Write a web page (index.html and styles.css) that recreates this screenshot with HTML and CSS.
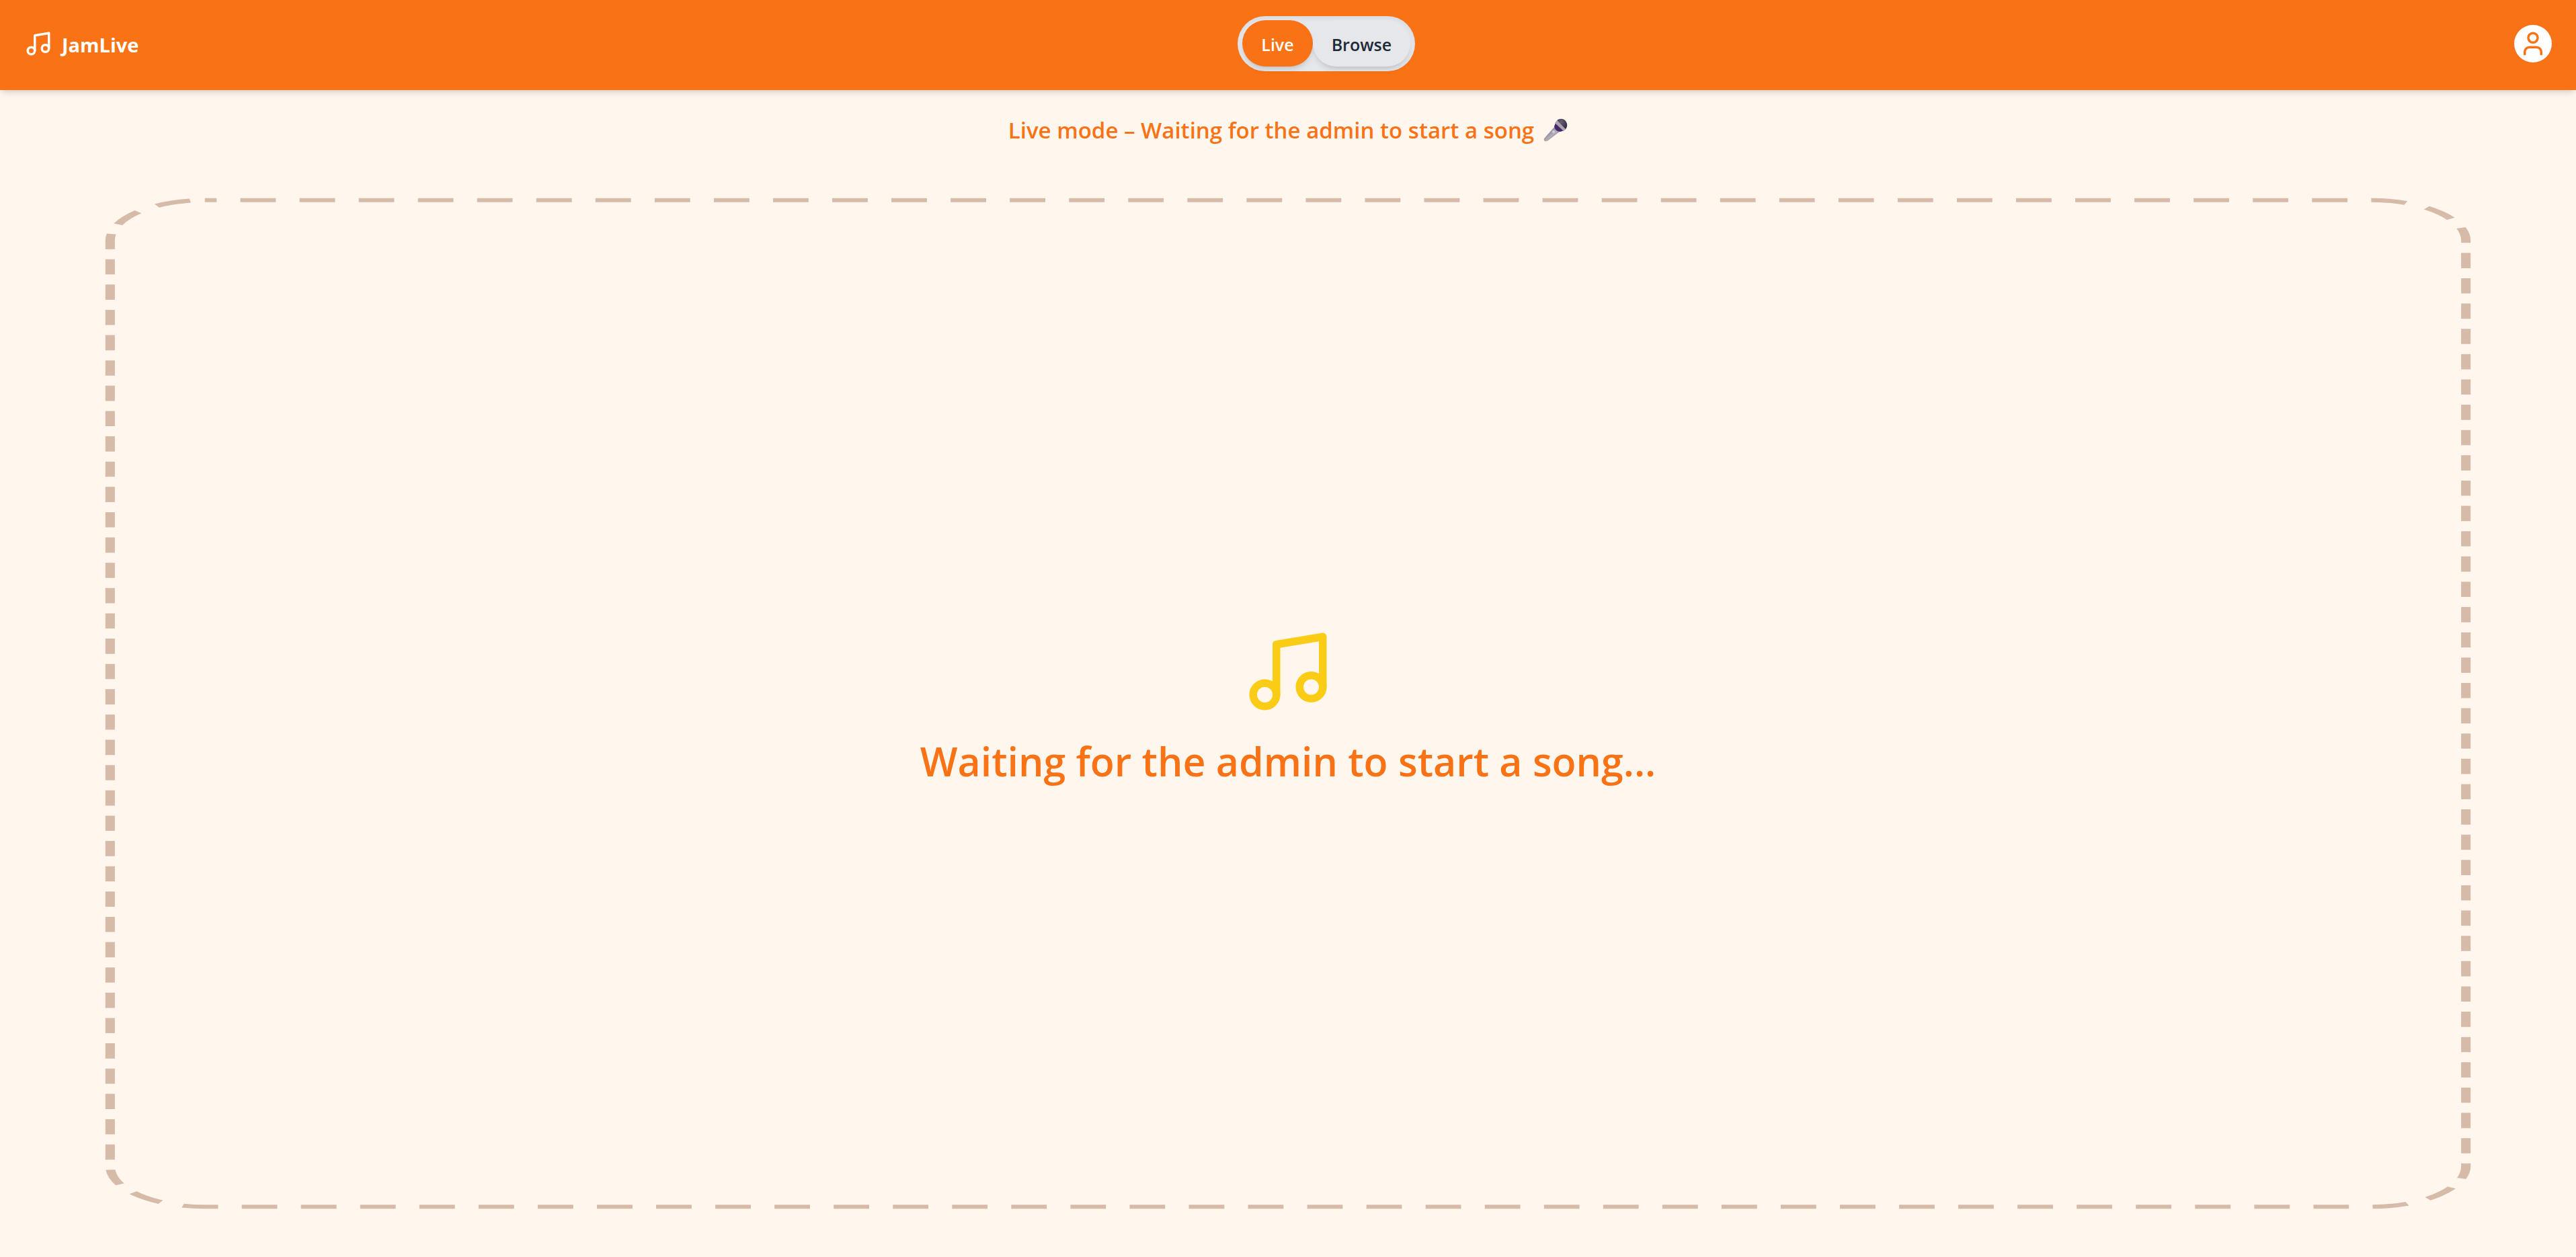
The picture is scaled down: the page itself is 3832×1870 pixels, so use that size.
FILE: index.html
```html
<!DOCTYPE html>
<html lang="en">
<head>
<meta charset="utf-8">
<meta name="viewport" content="width=device-width, initial-scale=1">
<title>JamLive</title>
<link rel="stylesheet" href="styles.css">
</head>
<body>
<header class="topbar">
  <a class="brand" href="#">
    <svg class="icon" viewBox="0 0 24 24" aria-hidden="true"><path d="M9 18V5l12-2v13"/><circle cx="6" cy="18" r="3"/><circle cx="18" cy="16" r="3"/></svg>
    <span class="brand-name">JamLive</span>
  </a>
  <div class="mode-toggle" role="group" aria-label="Mode">
    <button class="mode mode-active" type="button">Live</button>
    <button class="mode" type="button">Browse</button>
  </div>
  <button class="avatar" type="button" aria-label="Account">
    <svg class="icon" viewBox="0 0 24 24" aria-hidden="true"><path d="M19 21v-2a4 4 0 0 0-4-4H9a4 4 0 0 0-4 4v2"/><circle cx="12" cy="7" r="4"/></svg>
  </button>
</header>
<main class="stage">
  <p class="status">
    <span>Live mode – Waiting for the admin to start a song</span>
    <svg class="mic" viewBox="0 0 36 36" aria-hidden="true">
      <defs>
        <linearGradient id="handle" x1="0" y1="0" x2="1" y2="1"><stop offset=".3" stop-color="#8b8492"/><stop offset=".55" stop-color="#b5afba"/><stop offset=".8" stop-color="#6f6878"/></linearGradient>
        <radialGradient id="head" cx=".4" cy=".3" r=".7"><stop offset="0" stop-color="#6b6175"/><stop offset="1" stop-color="#352a42"/></radialGradient>
      </defs>
      <path d="M17 12 1 30q-1 3 1 4 2 1 5-1l18-14z" fill="url(#handle)"/>
      <path d="M18 7l-2 5q1 7 9 8l6-2z" fill="#46286b"/>
      <path d="M20 3q5-4 11-1 5 4 4 10-1 4-3 5z" fill="url(#head)"/>
      <path d="M20 3 17 7 30 19l3-3z" fill="#aaa4b0"/>
      <circle cx="15" cy="20" r="2" fill="#d3cfd8"/>
    </svg>
  </p>
  <section class="waiting">
    <svg class="dashes" viewBox="0 0 100 100" preserveAspectRatio="none" aria-hidden="true"><rect x=".25" y=".25" width="99.5" height="99.5" rx="4" ry="4"/></svg>
    <svg class="icon note" viewBox="0 0 24 24" aria-hidden="true"><path d="M9 18V5l12-2v13"/><circle cx="6" cy="18" r="3"/><circle cx="18" cy="16" r="3"/></svg>
    <h1 class="waiting-text">Waiting for the admin to start a song...</h1>
  </section>
</main>
</body>
</html>
```
FILE: styles.css
```css
* {
  box-sizing: border-box;
}

body {
  margin: 0;
  min-height: 100vh;
  display: flex;
  flex-direction: column;
  background: #fff7ed;
  color: #f97316;
  font-family: "Segoe UI", "Open Sans", "Noto Sans", sans-serif;
}

.icon {
  display: block;
  width: 42px;
  height: 42px;
  fill: none;
  stroke: currentColor;
  stroke-width: 2;
  stroke-linecap: round;
  stroke-linejoin: round;
}

.topbar {
  display: flex;
  align-items: center;
  justify-content: space-between;
  padding: 24px 36px 28px;
  background: #f97316;
  color: #fff;
  box-shadow: 0 7px 10px -2px rgba(0, 0, 0, .1), 0 4px 7px -4px rgba(0, 0, 0, .1);
}

.brand {
  display: flex;
  align-items: center;
  gap: 14px;
  color: inherit;
  text-decoration: none;
}

.brand-name {
  padding-top: 4px;
  font-size: 29px;
  line-height: 42px;
  font-weight: 700;
}

.mode-toggle {
  display: flex;
  padding: 6px 7px 7px;
  border-radius: 41px;
  background: #e5e7eb;
  box-shadow: inset 0 4px 7px rgba(0, 0, 0, .05);
}

.mode {
  padding: 16px 28px 12px;
  border: 0;
  border-radius: 35px;
  background: #e5e7eb;
  color: #1f2937;
  font: inherit;
  font-size: 25px;
  line-height: 41px;
  font-weight: 600;
  box-shadow: 0 7px 10px -2px rgba(0, 0, 0, .1), 0 4px 7px -4px rgba(0, 0, 0, .1);
}

.mode-active {
  background: #f97316;
  color: #fff;
}

.avatar {
  display: flex;
  align-items: center;
  justify-content: center;
  width: 56px;
  height: 56px;
  padding: 0;
  border: 0;
  border-radius: 50%;
  background: #fff;
  color: #f97316;
}

.stage {
  flex: 1;
  display: flex;
  flex-direction: column;
  gap: 74px;
  padding: 34px 155px 71px;
}

.status {
  display: flex;
  align-items: center;
  justify-content: center;
  gap: 14px;
  margin: 0;
  font-size: 33px;
  line-height: 52px;
  font-weight: 600;
}

.mic {
  width: 36px;
  height: 36px;
}

.waiting {
  position: relative;
  flex: 1;
  display: flex;
  flex-direction: column;
  align-items: center;
  justify-content: center;
  gap: 28px;
  padding-top: 4px;
}

.dashes {
  position: absolute;
  inset: 0;
  width: 100%;
  height: 100%;
  fill: none;
  stroke: #d6bba9;
  stroke-width: .4;
  stroke-dasharray: 1.5 1;
  stroke-dashoffset: 1;
}

.note {
  width: 138px;
  height: 138px;
  color: #facc15;
}

.waiting-text {
  margin: 0;
  font-size: 59px;
  line-height: 72px;
  font-weight: 600;
  text-align: center;
}
```
